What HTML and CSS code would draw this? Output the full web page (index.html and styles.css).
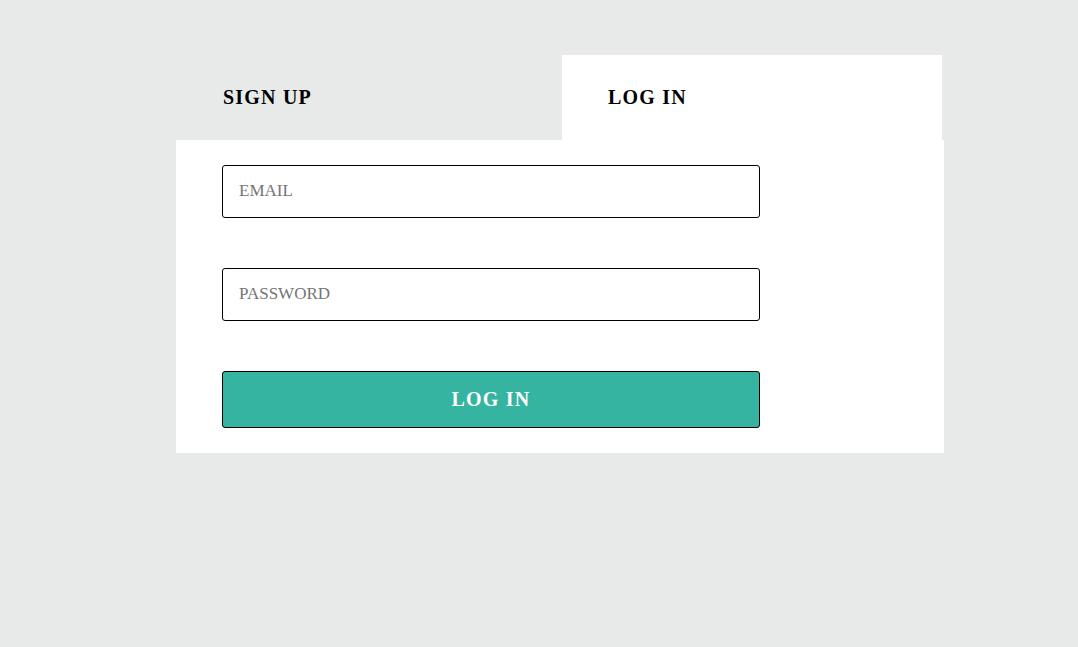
FILE: index.html
```html
<!DOCTYPE html>
<html lang="en">
<head>
<meta charset="utf-8">
<title>Log In</title>
<link rel="stylesheet" href="styles.css">
</head>
<body>
<div class="form">
  <div class="tabs">
    <div class="tab tab-signup">SIGN UP</div>
    <div class="tab tab-login">LOG IN</div>
  </div>
  <div class="panel">
    <input class="field" type="email" placeholder="EMAIL">
    <input class="field" type="password" placeholder="PASSWORD">
    <button class="submit" type="button">LOG IN</button>
  </div>
</div>
</body>
</html>
```
FILE: styles.css
```css
html, body {
  margin: 0;
  padding: 0;
  background: #e8eae9;
  font-family: "Liberation Serif", "Times New Roman", serif;
}

.form {
  width: 768px;
  margin: 55px 0 0 176px;
}

.tabs {
  display: flex;
  height: 85px;
}

.tab {
  display: flex;
  align-items: center;
  box-sizing: border-box;
  font-size: 20px;
  font-weight: bold;
  letter-spacing: 1.2px;
  color: #000;
}

.tab-signup {
  width: 386px;
  padding-left: 47px;
}

.tab-login {
  width: 380px;
  padding-left: 46px;
  background: #fff;
}

.panel {
  background: #fff;
  padding: 25px 0 25px 46px;
  display: flex;
  flex-direction: column;
  gap: 50px;
}

.field {
  box-sizing: border-box;
  width: 538px;
  height: 53px;
  margin: 0;
  padding: 0 16px 1px;
  border: 1px solid #000;
  border-radius: 3px;
  background: #fff;
  font-family: "Liberation Serif", "Times New Roman", serif;
  font-size: 17px;
  color: #000;
  outline: none;
}

.field::placeholder {
  color: #757575;
}

.submit {
  box-sizing: border-box;
  width: 538px;
  height: 57px;
  margin: 0;
  border: 1px solid #000;
  border-radius: 3px;
  background: #35b4a1;
  color: #fff;
  font-family: "Liberation Serif", "Times New Roman", serif;
  font-size: 20px;
  font-weight: bold;
  letter-spacing: 1.2px;
  cursor: pointer;
}
```
